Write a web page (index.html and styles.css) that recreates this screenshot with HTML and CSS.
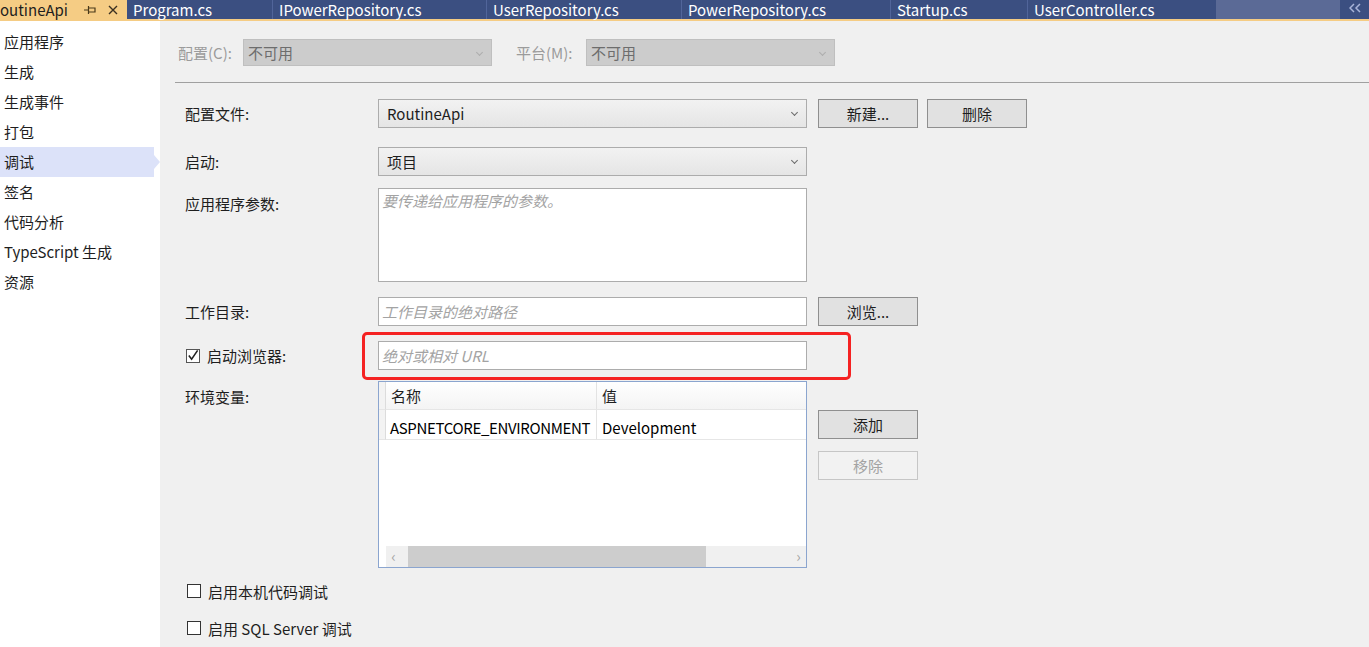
FILE: index.html
```html
<!DOCTYPE html>
<html lang="zh-CN">
<head>
    <meta charset="UTF-8">
    <title>RoutineApi - 调试</title>
    <link rel="stylesheet" href="styles.css">
</head>
<body>
    <!-- document tabs -->
    <div class="tabbar">
        <div class="tab tab-active">
            <span class="tab-name">outineApi</span>
            <svg class="pin" width="12" height="10" viewBox="0 0 12 10">
                <path d="M0 5H4M4.5 1V9M5 3H11V7H5" fill="none" stroke="#4a3a1a" stroke-width="1.2"/>
            </svg>
            <svg class="close" width="10" height="10" viewBox="0 0 10 10">
                <path d="M1 1L9 9M9 1L1 9" stroke="#3a3020" stroke-width="1.4"/>
            </svg>
        </div>
        <div class="tab tab-program">Program.cs</div>
        <div class="tab tab-ipower">IPowerRepository.cs</div>
        <div class="tab tab-user">UserRepository.cs</div>
        <div class="tab tab-power">PowerRepository.cs</div>
        <div class="tab tab-startup">Startup.cs</div>
        <div class="tab tab-ctrl">UserController.cs</div>
        <div class="tab-fill"></div>
        <div class="tab-more">
            <svg width="12" height="10" viewBox="0 0 12 10">
                <path d="M5 1L1 5L5 9M11 1L7 5L11 9" fill="none" stroke="#a9b5da" stroke-width="1.5"/>
            </svg>
        </div>
    </div>
    <div class="tab-line"></div>

    <div class="workspace">
        <ul class="nav">
            <li>应用程序</li>
            <li>生成</li>
            <li>生成事件</li>
            <li>打包</li>
            <li class="selected">调试</li>
            <li>签名</li>
            <li>代码分析</li>
            <li>TypeScript 生成</li>
            <li>资源</li>
        </ul>

        <div class="page">
            <div class="config-row">
                <span class="config-label">配置(C):</span>
                <div class="select select-disabled">不可用<span class="chev chev-light"></span></div>
                <span class="config-label platform">平台(M):</span>
                <div class="select select-disabled">不可用<span class="chev chev-light"></span></div>
            </div>
            <div class="divider"></div>

            <div class="form">
                <div class="row row-profile">
                    <div class="label">配置文件:</div>
                    <div class="select control">RoutineApi<span class="chev"></span></div>
                    <button class="btn">新建...</button>
                    <button class="btn btn-next">删除</button>
                </div>

                <div class="row row-launch">
                    <div class="label">启动:</div>
                    <div class="select control">项目<span class="chev"></span></div>
                </div>

                <div class="row row-args">
                    <div class="label label-top">应用程序参数:</div>
                    <div class="textarea control">要传递给应用程序的参数。</div>
                </div>

                <div class="row row-dir">
                    <div class="label">工作目录:</div>
                    <div class="input control">工作目录的绝对路径</div>
                    <button class="btn">浏览...</button>
                </div>

                <div class="row row-browser">
                    <div class="label">
                        <span class="checkbox checked">
                            <svg width="13" height="13" viewBox="0 0 13 13">
                                <path d="M2 6.5L5 10.5L11.5 1" fill="none" stroke="#222" stroke-width="1.7"/>
                            </svg>
                        </span>
                        <span>启动浏览器:</span>
                    </div>
                    <div class="input control annotated">
                        绝对或相对 URL
                        <div class="highlight"></div>
                    </div>
                </div>

                <div class="row row-env">
                    <div class="label label-top">环境变量:</div>
                    <div class="grid control">
                        <div class="grid-table">
                            <div class="cell rowhead"></div>
                            <div class="cell head">名称</div>
                            <div class="cell head last">值</div>
                            <div class="cell rowhead"></div>
                            <div class="cell data">ASPNETCORE_ENVIRONMENT</div>
                            <div class="cell data last">Development</div>
                        </div>
                        <div class="grid-space"></div>
                        <div class="hscroll">
                            <span class="arrow">‹</span>
                            <span class="thumb"></span>
                            <span class="hscroll-rest"></span>
                            <span class="arrow">›</span>
                        </div>
                    </div>
                    <div class="side-buttons">
                        <button class="btn">添加</button>
                        <button class="btn btn-disabled">移除</button>
                    </div>
                </div>

                <div class="check-row">
                    <span class="checkbox"></span>
                    <span>启用本机代码调试</span>
                </div>
                <div class="check-row">
                    <span class="checkbox"></span>
                    <span>启用 SQL Server 调试</span>
                </div>
            </div>
        </div>
    </div>
</body>
</html>
```

FILE: styles.css
```css
* {
    box-sizing: border-box;
}
body {
    margin: 0;
    width: 1369px;
    height: 647px;
    overflow: hidden;
    font-family: "Noto Sans CJK SC", "Microsoft YaHei", sans-serif;
    font-size: 15px;
    color: #1e1e1e;
    background: #f0f0f0;
}

/* tabs */
.tabbar {
    display: flex;
    height: 19px;
    background: #3b4f81;
    color: #fff;
    line-height: 19px;
    white-space: nowrap;
}
.tab {
    padding-left: 6px;
    flex: none;
    border-left: 1px solid #51659a;
}
.tab-active {
    display: flex;
    align-items: center;
    width: 127px;
    padding-left: 0;
    border-left: none;
    background: #f5cc84;
    color: #1e1e1e;
}
.tab-name {
    width: 84px;
}
.pin {
    margin-right: 12px;
}
.tab-program { width: 145px; border-left: none; }
.tab-ipower { width: 214px; }
.tab-user { width: 195px; }
.tab-power { width: 209px; }
.tab-startup { width: 137px; }
.tab-ctrl { width: 189px; }
.tab-fill {
    width: 124px;
    background: #5b6a96;
}
.tab-more {
    flex: 1;
    display: flex;
    align-items: center;
    justify-content: center;
    padding-bottom: 3px;
}
.tab-line {
    height: 2px;
    background: #f5cc84;
}

.workspace {
    display: flex;
    height: 626px;
}

/* left navigation */
.nav {
    list-style: none;
    margin: 0;
    padding: 6px 0 0;
    width: 160px;
    background: #fff;
    flex: none;
}
.nav li {
    height: 30px;
    line-height: 30px;
    padding-left: 4px;
    width: 154px;
    position: relative;
}
.nav li.selected {
    background: #dce2f9;
}
.nav li.selected::after {
    content: "";
    position: absolute;
    right: -6px;
    top: 8px;
    border-left: 6px solid #dce2f9;
    border-top: 7px solid transparent;
    border-bottom: 7px solid transparent;
}

/* page */
.page {
    flex: 1;
    padding-top: 18px;
}
.config-row {
    display: flex;
    align-items: center;
    padding-left: 18px;
}
.config-label {
    width: 65px;
    color: #9b9b9b;
}
.config-label.platform {
    width: 70px;
    margin-left: 24px;
}
.select {
    position: relative;
    height: 27px;
    line-height: 25px;
    border: 1px solid #acacac;
    padding-left: 8px;
    background: linear-gradient(#f2f2f2, #e5e5e5);
}
.select-disabled {
    width: 249px;
    background: #cccccc;
    border-color: #bfbfbf;
    color: #6d6d6d;
    padding-left: 4px;
}
.chev {
    position: absolute;
    right: 9px;
    top: 10px;
    width: 5px;
    height: 5px;
    border-right: 1px solid #6a6a6a;
    border-bottom: 1px solid #6a6a6a;
    transform: rotate(45deg);
}
.chev-light {
    border-color: #adadad;
}
.divider {
    margin: 16px 0 0 15px;
    height: 1px;
    background: #a0a0a0;
}

/* form */
.form {
    padding-left: 25px;
}
.row {
    display: flex;
    align-items: flex-start;
}
.row-profile { margin-top: 16px; }
.row-launch { margin-top: 19px; }
.row-args { margin-top: 12px; }
.row-dir { margin-top: 15px; }
.row-browser { margin-top: 15px; }
.row-env { margin-top: 11px; }
.label {
    width: 193px;
    height: 29px;
    line-height: 28px;
    display: flex;
    align-items: center;
}
.label-top {
    padding-top: 2px;
}
.control {
    width: 429px;
    flex: none;
}
.row .select {
    height: 29px;
    line-height: 27px;
}
.textarea,
.input {
    background: #fff;
    border: 1px solid #acacac;
    color: #a3a3a3;
    font-style: italic;
    padding-left: 3px;
}
.textarea {
    height: 94px;
    line-height: 24px;
}
.input {
    height: 29px;
    line-height: 27px;
}
.annotated {
    position: relative;
}
.highlight {
    position: absolute;
    left: -17px;
    top: -10px;
    width: 489px;
    height: 48px;
    border: 3px solid #f52222;
    border-radius: 5px;
}
.btn {
    width: 100px;
    height: 29px;
    margin-left: 11px;
    border: 1px solid #8f8f8f;
    background: #e1e1e1;
    font-family: inherit;
    font-size: 15px;
    color: #1e1e1e;
    padding: 0;
}
.btn-next {
    margin-left: 9px;
}
.btn-disabled {
    margin-top: 12px;
    background: #f2f2f2;
    border-color: #c6c6c6;
    color: #a3a3a3;
}
.side-buttons {
    display: flex;
    flex-direction: column;
    padding-top: 29px;
}

.checkbox {
    width: 14px;
    height: 14px;
    border: 1px solid #333;
    background: #fff;
    display: inline-flex;
    align-items: center;
    justify-content: center;
    margin: 0 7px 0 1px;
    flex: none;
}
.checkbox.checked {
    border-color: #555;
}

/* environment grid */
.grid {
    height: 187px;
    border: 1px solid #8ba5cf;
    background: #fff;
    display: flex;
    flex-direction: column;
}
.grid-table {
    display: grid;
    grid-template-columns: 7px 211px 1fr;
    grid-template-rows: 28px 30px;
}
.cell {
    padding-left: 5px;
    line-height: 28px;
    border-right: 1px solid #e3e3e3;
    border-bottom: 1px solid #e6e6e6;
    white-space: nowrap;
    overflow: hidden;
}
.cell.last {
    border-right: none;
}
.rowhead {
    padding: 0;
    background: #f3f3f3;
    border-right-color: #dcdcdc;
}
.head {
    background: linear-gradient(#fff, #f4f4f4);
}
.data {
    color: #000;
    line-height: 29px;
    padding-top: 3px;
}
.data:not(.last) {
    letter-spacing: -0.35px;
    padding-left: 4px;
}
.grid-space {
    flex: 1;
}
.hscroll {
    display: flex;
    height: 21px;
    margin-left: 7px;
    background: #f0f0f0;
    color: #a6a6a6;
    line-height: 20px;
}
.arrow {
    width: 15px;
    text-align: center;
    font-size: 15px;
}
.thumb {
    width: 298px;
    background: #cdcdcd;
    margin-left: 7px;
}
.hscroll-rest {
    flex: 1;
}

.check-row {
    display: flex;
    align-items: center;
    height: 28px;
    margin-top: 9px;
}
.check-row .checkbox {
    margin-left: 2px;
}
```
